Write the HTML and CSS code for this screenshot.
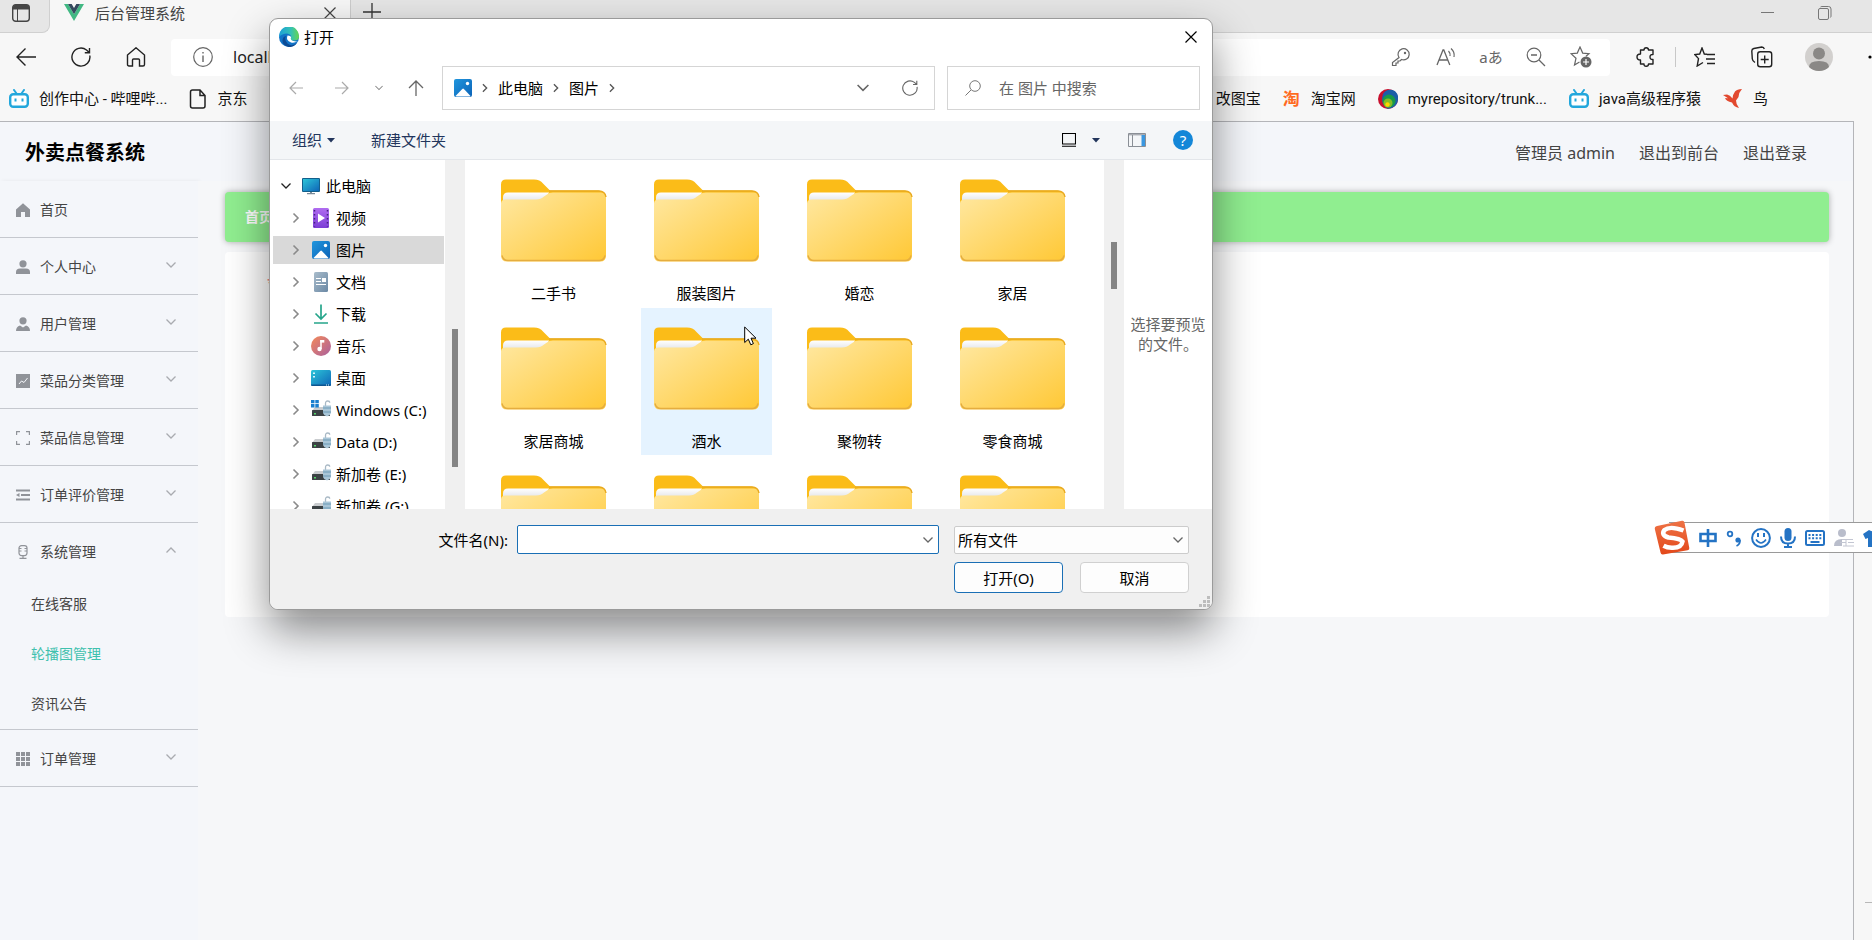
FILE: index.html
```html
<!DOCTYPE html>
<html lang="zh-CN">
<head>
    <meta charset="UTF-8">
    <meta name="viewport" content="width=device-width, initial-scale=1.0">
    <title>后台管理系统</title>
    <link rel="stylesheet" href="styles.css">
</head>
<body>

    <svg class="defs" aria-hidden="true">
        <defs>
            <linearGradient id="gFolder" x1="0" y1="0" x2="1" y2="1">
                <stop offset="0" stop-color="#ffe8a2"/>
                <stop offset="1" stop-color="#ffc835"/>
            </linearGradient>
            <linearGradient id="gPaper" x1="0" y1="0" x2="0" y2="1">
                <stop offset="0" stop-color="#fff"/>
                <stop offset="1" stop-color="#d9dbdf"/>
            </linearGradient>
            <linearGradient id="gBlue" x1="0" y1="0" x2="1" y2="1">
                <stop offset="0" stop-color="#2cc5d8"/>
                <stop offset="1" stop-color="#0f66b8"/>
            </linearGradient>
            <linearGradient id="gPic" x1="0" y1="0" x2="1" y2="1">
                <stop offset="0" stop-color="#2196dd"/>
                <stop offset="1" stop-color="#0b63b8"/>
            </linearGradient>
            <linearGradient id="gVideo" x1="0" y1="0" x2="0" y2="1">
                <stop offset="0" stop-color="#b06cf0"/>
                <stop offset="1" stop-color="#7c3ed6"/>
            </linearGradient>
            <linearGradient id="gMusic" x1="0" y1="0" x2="1" y2="1">
                <stop offset="0" stop-color="#f58a58"/>
                <stop offset="1" stop-color="#a9609f"/>
            </linearGradient>
            <linearGradient id="gDoc" x1="0" y1="0" x2="1" y2="1">
                <stop offset="0" stop-color="#a9bccb"/>
                <stop offset="1" stop-color="#6b89a5"/>
            </linearGradient>
            <linearGradient id="gEdgeTop" x1="0" y1="0" x2="1" y2="0">
                <stop offset="0" stop-color="#1a9fd8"/>
                <stop offset=".6" stop-color="#35c1b4"/>
                <stop offset="1" stop-color="#66d64f"/>
            </linearGradient>
            <linearGradient id="gSogou" x1="0" y1="0" x2="0" y2="1">
                <stop offset="0" stop-color="#ee7346"/>
                <stop offset="1" stop-color="#e3481a"/>
            </linearGradient>
        </defs>

        <symbol id="folder" viewBox="0 0 106 83">
            <path d="M0 21V6q0-5 5-5h28q6 0 9 4l7 7h48q7 0 7 6v16H0z" fill="#fbbc18"/>
            <path d="M2 26v-7q0-5 5-5h41l-4 8z" fill="url(#gPaper)"/>
            <path d="M0 25q0-4 5-4h30q5 0 8-3l3-2q2-2 6-2h47q6 0 6 5v58q0 6-6 6H6q-6 0-6-6z" fill="url(#gFolder)"/>
            <path d="M1 77q1 5 6 5h91q5 0 6-5" fill="none" stroke="#e5ad3f" stroke-width="1.4"/>
            <path d="M48 12.500h50q6 0 7 6" fill="none" stroke="#e8a91f" stroke-width="1.4"/>
        </symbol>
        <symbol id="chev-right" viewBox="0 0 10 12"><path d="M2.500 1.500L7 6l-4.500 4.500" fill="none" stroke="currentColor" stroke-width="1.600"/></symbol>
        <symbol id="chev-down" viewBox="0 0 14 10"><path d="M2.500 2.500L7 7l4.500-4.500" fill="none" stroke="currentColor" stroke-width="1.300"/></symbol>
        <symbol id="caret" viewBox="0 0 8 5"><path d="M0 0h8L4 4.500z" fill="currentColor"/></symbol>
        <symbol id="pictures" viewBox="0 0 18 18">
            <rect width="18" height="18" rx="2" fill="url(#gPic)"/>
            <path d="M1.500 17l6.800-7q.8-.8 1.600 0l6.600 7q-.4.500-1 .500h-13z" fill="#fff"/>
            <circle cx="13.500" cy="4.500" r="1.700" fill="#fff"/>
        </symbol>
        <symbol id="pc" viewBox="0 0 18 17">
            <path d="M8 13h2v2h-2z" fill="#7b8b99"/><path d="M5 15h8v1.300H5z" fill="#7b8b99"/>
            <rect y="0" width="18" height="14" rx="1" fill="#135f8b"/>
            <rect x="1" y="1" width="16" height="12" fill="url(#gBlue)"/>
        </symbol>
        <symbol id="video" viewBox="0 0 20 20">
            <rect x="2" width="16" height="20" rx="1.500" fill="url(#gVideo)"/>
            <path d="M7 5.500l7 4.500-7 4.500z" fill="#fff"/>
            <path d="M3.500 2v16.500M16.500 2v16.500" stroke="#44217f" stroke-width="1.500" stroke-dasharray="1.600 2.400"/>
        </symbol>
        <symbol id="doc" viewBox="0 0 20 20">
            <rect x="3" width="14" height="20" rx="1.500" fill="url(#gDoc)"/>
            <path d="M5 6.500h5M5 9.500h5M5 12.500h10" stroke="#fff" stroke-width="1.200"/>
            <rect x="11" y="6" width="4" height="4" fill="#fff"/>
        </symbol>
        <symbol id="download" viewBox="0 0 20 20">
            <path d="M10 .5v14M4.500 9.500L10 15l5.500-5.500M3 19h14" fill="none" stroke="#26a58b" stroke-width="1.700"/>
        </symbol>
        <symbol id="music" viewBox="0 0 20 20">
            <circle cx="10" cy="10" r="10" fill="url(#gMusic)"/>
            <path d="M10 4v9" stroke="#fff" stroke-width="1.500"/><path d="M9.300 4h4v2.600h-4z" fill="#fff"/>
            <circle cx="8.500" cy="13" r="2.200" fill="#fff"/>
        </symbol>
        <symbol id="desktop" viewBox="0 0 20 20">
            <rect y="2" width="20" height="16" rx="1.500" fill="url(#gBlue)"/>
            <path d="M0 16.500h20q0 1.500-1.500 1.500h-17Q0 18 0 16.500z" fill="#0d5590"/>
            <path d="M2 4.500h2v1.500H2zM2 8h2v1.500H2zM15 16.500h1v1h-1zM17 16.500h1v1h-1z" fill="#d8f4fa"/>
        </symbol>
        <symbol id="drive" viewBox="0 0 20 20">
            <path d="M4 7h13l3 4H1z" fill="#c9cccf"/>
            <rect x="1" y="10" width="18" height="6" rx=".5" fill="#3c4245"/>
            <rect x="3" y="13" width="2" height="1.500" fill="#55d36a"/>
            <path d="M14.500 6V3.500q0-2.500 2.200-2.500 2 0 2 1.800" fill="none" stroke="#a9b9c5" stroke-width="1.300"/>
            <path d="M12 5.500h8V13q-1 3-4 3.500-3-.5-4-3.500z" fill="#a9c6d8"/>
            <path d="M12 8h8M12 12h8" stroke="#6d9ab5" stroke-width="1"/>
        </symbol>
        <symbol id="winflag" viewBox="0 0 20 20">
            <path d="M0 0h3.500v3.300H0zM4.300 0h3.500v3.300H4.300zM0 4.100h3.500v3.300H0zM4.300 4.100h3.500v3.300H4.300z" fill="#1a7fcf"/>
        </symbol>
        <symbol id="bili" viewBox="0 0 20 20">
            <path d="M5 1l2.500 3.500M15 1l-2.500 3.500" stroke="#23a7dc" stroke-width="2" stroke-linecap="round"/>
            <rect x="1.200" y="5.200" width="17.600" height="12.600" rx="3" fill="#fff" stroke="#23a7dc" stroke-width="2.400"/>
            <path d="M6.500 9.500v3M13.500 9.500v3" stroke="#23a7dc" stroke-width="2"/>
        </symbol>
        <symbol id="refresh" viewBox="0 0 20 20">
            <path d="M18.800 8.500A9 9 0 1 1 15.500 3L18 5.200M18.500 1v4.700h-4.700" fill="none" stroke="currentColor" stroke-width="1.400"/>
        </symbol>
        <symbol id="cross" viewBox="0 0 12 12"><path d="M.5.5l11 11M11.500.5l-11 11" stroke="currentColor" stroke-width="1.200"/></symbol>
    </svg>

    <!-- browser chrome -->
    <div class="tabs">
        <button class="tab-menu" aria-label="标签操作">
            <svg width="18" height="18" viewBox="0 0 18 18"><rect x=".7" y=".7" width="16.600" height="16.600" rx="3" fill="none" stroke="#444" stroke-width="1.400"/><path d="M1 5.500V3q0-2 2-2h12q2 0 2 2v2.500z" fill="#444"/><path d="M5.500 5v12" stroke="#444"/></svg>
        </button>
        <div class="tab">
            <svg width="20" height="17" viewBox="0 0 20 17"><path d="M0 0h4l6 10.300L16 0h4L10 17z" fill="#41b883"/><path d="M4 0h3.700L10 4l2.300-4H16l-6 10.300z" fill="#34495e"/></svg>
            <span class="tab-title">后台管理系统</span>
            <button aria-label="关闭标签页"><svg width="12" height="12"><use href="#cross"/></svg></button>
        </div>
        <button class="tab-new" aria-label="新建标签页"><svg width="18" height="18" viewBox="0 0 18 18"><path d="M9 0v18M0 9h18" stroke="#333" stroke-width="1.300"/></svg></button>
        <div class="win-buttons">
            <button aria-label="最小化"><svg width="14" height="14" viewBox="0 0 14 14"><path d="M0 6.500h13" stroke="#777"/></svg></button>
            <button aria-label="还原"><svg width="14" height="14" viewBox="0 0 14 14"><rect x=".5" y="2.500" width="10" height="11" rx="1.500" fill="none" stroke="#777"/><path d="M2.500 1q.5-.5 1.500-.5h6.500q2.500 0 2.500 2.500v7q0 1-.6 1.500" fill="none" stroke="#777"/></svg></button>
        </div>
    </div>

    <div class="toolbar">
        <div class="nav-buttons">
            <button aria-label="后退"><svg width="20" height="20" viewBox="0 0 20 20"><path d="M20 10H1M9.500 1.500L1 10l8.500 8.500" fill="none" stroke="#222" stroke-width="1.400"/></svg></button>
            <button aria-label="刷新"><svg width="20" height="20"><use href="#refresh"/></svg></button>
            <button aria-label="主页"><svg width="20" height="20" viewBox="0 0 20 20"><path d="M1.500 8L10 .8 18.500 8v9.500q0 1.500-1.500 1.500h-3.500v-6q0-1-1-1h-5q-1 0-1 1v6H3q-1.500 0-1.500-1.500z" fill="none" stroke="#222" stroke-width="1.400"/></svg></button>
        </div>
        <div class="url">
            <svg width="20" height="20" viewBox="0 0 20 20"><circle cx="10" cy="10" r="9.300" fill="none" stroke="#666" stroke-width="1.200"/><path d="M10 8.500V15M10 5v1.500" stroke="#666" stroke-width="1.400"/></svg>
            <input type="text" aria-label="地址" value="localhost:8080">
            <button aria-label="密码"><svg width="20" height="20" viewBox="0 0 20 20"><path d="M8 10.500A5.600 5.600 0 1 1 10.500 12.500L9 14H7v2H5v2.500H1.500v-3z" fill="none" stroke="#666" stroke-width="1.200"/><circle cx="14" cy="6" r="1.200" fill="#666"/></svg></button>
            <button aria-label="朗读"><svg width="20" height="20" viewBox="0 0 20 20"><path d="M1 18L7 3h.8l6 15M3 13h9" fill="none" stroke="#666" stroke-width="1.300"/><path d="M12.500 4q2 2 1.500 5M15 1.500q4 3.500 3 8.500" fill="none" stroke="#666" stroke-width="1.200"/></svg></button>
            <button class="translate" aria-label="翻译">aあ</button>
            <button aria-label="缩小"><svg width="20" height="20" viewBox="0 0 20 20"><circle cx="8" cy="8" r="6.800" fill="none" stroke="#666" stroke-width="1.200"/><path d="M5 8h6M13 13l6 6" stroke="#666" stroke-width="1.300"/></svg></button>
            <button aria-label="收藏"><svg width="22" height="22" viewBox="0 0 22 22"><path d="M9.500 16L4.500 19 6 12.200 1 7.700l6.300-.6L10 1l2.700 6.100 6.300.6-3 2.600" fill="none" stroke="#666" stroke-width="1.200"/><circle cx="16" cy="16" r="5.500" fill="#666"/><path d="M16 13v6M13 16h6" stroke="#fff" stroke-width="1.200"/></svg></button>
        </div>
        <div class="tools">
            <button aria-label="扩展"><svg width="20" height="20" viewBox="0 0 20 20"><path d="M4.500 3H8q0-2.200 2.200-2.200T12.500 3H17v4.500q-3-.3-3 2.500t3 2.500V17h-4.500q0 2.200-2.300 2.200T8 17H4.500v-4Q1 13 1 10t3.500-3z" fill="none" stroke="#222" stroke-width="1.400" stroke-linejoin="round"/></svg></button>
            <span class="divider"></span>
            <button aria-label="收藏夹"><svg width="22" height="20" viewBox="0 0 22 20"><path d="M13 7.200l-2.700-.2L8 1 5.700 7 .8 7.600l3.700 4L3.200 19 9 15.500M13 7.500h8M12 12h9M13 16.500h8" fill="none" stroke="#222" stroke-width="1.400"/></svg></button>
            <button class="spaced" aria-label="集锦"><svg width="22" height="22" viewBox="0 0 22 22"><path d="M4 16.500Q1.500 15 1.300 13L.8 5q0-2 2-2.500l8-1.500q2 0 2.500 2" fill="none" stroke="#222" stroke-width="1.400"/><rect x="6.700" y="5.700" width="14" height="15" rx="2.500" fill="none" stroke="#222" stroke-width="1.400"/><path d="M13.700 9.500v8M9.700 13.500h8" stroke="#222" stroke-width="1.400"/></svg></button>
            <button class="spaced" aria-label="用户"><svg width="28" height="28" viewBox="0 0 28 28"><circle cx="14" cy="14" r="14" fill="#d2d0ce"/><circle cx="14" cy="10.500" r="6" fill="#8a8886"/><path d="M4 24q0-6 10-6t10 6q-4 4-10 4T4 24z" fill="#8a8886"/></svg></button>
            <button class="more" aria-label="更多"><svg width="20" height="4" viewBox="0 0 20 4"><circle cx="5" cy="2" r="1.600"/><circle cx="11" cy="2" r="1.600"/><circle cx="17" cy="2" r="1.600"/></svg></button>
        </div>
    </div>

    <div class="bookmarks">
        <a href="#"><svg width="20" height="20"><use href="#bili"/></svg>创作中心 - 哔哩哔...</a>
        <a href="#"><svg width="18" height="20" viewBox="0 0 18 20"><path d="M3.500 1H11l5 5.500V17q0 2-2 2H3.500q-2 0-2-2V3q0-2 2-2zM11 1v5.500h5" fill="none" stroke="#222" stroke-width="1.500"/></svg>京东</a>
        <a href="#" class="first-right">改图宝</a>
        <a href="#"><span class="taobao">淘</span>淘宝网</a>
        <a href="#"><svg width="20" height="20" viewBox="0 0 20 20"><circle cx="10" cy="10" r="10" fill="#c8102e"/><path d="M5 5a8 8 0 0 1 15 5A9.500 9.500 0 0 1 9 19.500Q2 14 5 5z" fill="#1b5fa8"/><circle cx="11" cy="12" r="6.500" fill="#189a48"/><circle cx="10" cy="14" r="4.500" fill="#86bc25"/><circle cx="9.500" cy="15.500" r="2.200" fill="#ffd500"/></svg>myrepository/trunk...</a>
        <a href="#"><svg width="20" height="20"><use href="#bili"/></svg>java高级程序猿</a>
        <a href="#"><svg width="20" height="20" viewBox="0 0 20 20"><path d="M0 6l4-.5Q7 6 9.500 9.500 10 5 12 2.500 14 0 19 0q-3 3-3.500 8l-2.500 3.500q0 4 3 7.500-5-1-7-5.500Q3 12 2 9l3 .3z" fill="#e2492f"/></svg>鸟</a>
    </div>

    <!-- admin page -->
    <div class="viewport">
        <div class="page">
            <header>
                <h1>外卖点餐系统</h1>
                <nav>
                    <span>管理员 admin</span>
                    <a href="#">退出到前台</a>
                    <a href="#">退出登录</a>
                </nav>
            </header>
            <div class="content">
                <aside>
                    <ul class="menu">
                        <li><a href="#"><svg class="mi" viewBox="0 0 14 14"><path d="M7 .3L0 6.500V14h5V9h4v5h5V6.500z"/></svg>首页</a></li>
                        <li><a href="#"><svg class="mi" viewBox="0 0 14 14"><circle cx="7" cy="3.800" r="3.600"/><path d="M0 14v-2q0-3.500 4-3.500h6q4 0 4 3.500v2z"/></svg>个人中心<svg class="arrow"><use href="#chev-down"/></svg></a></li>
                        <li><a href="#"><svg class="mi" viewBox="0 0 14 14"><circle cx="7" cy="3.800" r="3.600"/><path d="M0 14q0-4.500 4-5.500l3 2 3-2q4 1 4 5.500z"/></svg>用户管理<svg class="arrow"><use href="#chev-down"/></svg></a></li>
                        <li><a href="#"><svg class="mi" viewBox="0 0 14 14"><path d="M0 0h14v14H0z"/><path d="M3 10l2.500-3 2.500 1.500L11.500 4" fill="none" stroke="#f4f6fa"/></svg>菜品分类管理<svg class="arrow"><use href="#chev-down"/></svg></a></li>
                        <li><a href="#"><svg class="mi line" viewBox="0 0 14 14"><path d="M.6 4V.6H4M10 .6h3.400V4M13.400 10v3.400H10M4 13.400H.6V10"/></svg>菜品信息管理<svg class="arrow"><use href="#chev-down"/></svg></a></li>
                        <li><a href="#"><svg class="mi" viewBox="0 0 14 14"><path d="M0 1.500h14v2H0zM5 6h9v2H5zM0 10.500h14v2H0zM0 7l3.500-2v4z"/></svg>订单评价管理<svg class="arrow"><use href="#chev-down"/></svg></a></li>
                        <li>
                            <a href="#"><svg class="mi line" viewBox="0 0 14 14"><rect x="3" y=".6" width="8" height="10" rx="2.500"/><path d="M3 3.500h2.500M8.500 3.500H11M3 6h2.500M8.500 6H11M7 11v2.500M3.500 13.400h7"/></svg>系统管理<svg class="arrow up"><use href="#chev-down"/></svg></a>
                            <ul class="submenu">
                                <li><a href="#">在线客服</a></li>
                                <li><a href="#" class="active">轮播图管理</a></li>
                                <li><a href="#">资讯公告</a></li>
                            </ul>
                        </li>
                        <li><a href="#"><svg class="mi" viewBox="0 0 14 14"><path d="M0 0h4v4H0zM5 0h4v4H5zM10 0h4v4h-4zM0 5h4v4H0zM5 5h4v4H5zM10 5h4v4h-4zM0 10h4v4H0zM5 10h4v4H5zM10 10h4v4h-4z"/></svg>订单管理<svg class="arrow"><use href="#chev-down"/></svg></a></li>
                    </ul>
                </aside>
                <main>
                    <div class="crumbs">首页</div>
                    <div class="card"><span class="required">*</span></div>
                </main>
            </div>
        </div>
        <div class="rail"><span></span></div>
    </div>

    <!-- file picker -->
    <div class="dialog" role="dialog" aria-label="打开">
        <div class="dialog-title">
            <svg width="20" height="20" viewBox="0 0 20 20"><circle cx="10" cy="10" r="10" fill="#1173c7"/><path d="M0 9.500A10 10 0 0 1 20 9q.3 4.500-5 4.500-4 0-3-2.500.6-4-4-4.500Q3 6.500 0 10z" fill="url(#gEdgeTop)"/><path d="M7 9q-2 4 1.500 7.500 4 3.500 9.500-.5-3 4.500-8.500 4Q3 18 3.500 13 4 9.500 7 9z" fill="#0c4a94"/><path d="M8.500 8.500q-2 5 3.500 7 3 1 7-1.500-2 .8-4.500 0-3.500-1-2.500-3.200.5-2-3.500-2.300z" fill="#fff"/></svg>
            <h2>打开</h2>
            <button aria-label="关闭"><svg width="12" height="12"><use href="#cross"/></svg></button>
        </div>

        <div class="dialog-nav">
            <div class="history">
                <button aria-label="返回"><svg width="14" height="14" viewBox="0 0 14 14"><path d="M14 7H1M7 1L1 7l6 6" fill="none" stroke="#aaa" stroke-width="1.200"/></svg></button>
                <button aria-label="前进"><svg width="14" height="14" viewBox="0 0 14 14"><path d="M0 7h13M7 1l6 6-6 6" fill="none" stroke="#aaa" stroke-width="1.200"/></svg></button>
                <button class="recent" aria-label="最近浏览"><svg width="12" height="8"><use href="#chev-down"/></svg></button>
                <button aria-label="上移"><svg width="16" height="16" viewBox="0 0 16 16"><path d="M8 16V1M1 8l7-7 7 7" fill="none" stroke="#666" stroke-width="1.300"/></svg></button>
            </div>
            <div class="address">
                <svg width="18" height="18"><use href="#pictures"/></svg>
                <svg class="sep"><use href="#chev-right"/></svg>
                <a href="#">此电脑</a>
                <svg class="sep"><use href="#chev-right"/></svg>
                <a href="#">图片</a>
                <svg class="sep"><use href="#chev-right"/></svg>
                <button class="history-drop" aria-label="以前的位置"><svg width="18" height="12"><use href="#chev-down"/></svg></button>
                <button aria-label="刷新图片"><svg width="16" height="16"><use href="#refresh"/></svg></button>
            </div>
            <div class="search">
                <svg width="16" height="16" viewBox="0 0 16 16"><circle cx="10" cy="6" r="5.300" fill="none" stroke="#777"/><path d="M6 10l-5.500 5.500" stroke="#777"/></svg>
                <input type="text" aria-label="搜索" placeholder="在 图片 中搜索">
            </div>
        </div>

        <div class="dialog-tools">
            <button>组织<svg width="8" height="5"><use href="#caret"/></svg></button>
            <button>新建文件夹</button>
            <div class="view-tools">
                <button aria-label="视图"><svg width="14" height="14" viewBox="0 0 14 14"><path d="M.5.5h13v10.500H.5zM0 13.300h14" fill="none" stroke="#000" stroke-width="1.100"/></svg></button>
                <button class="view-more" aria-label="更多选项"><svg width="8" height="5"><use href="#caret"/></svg></button>
                <button class="pane" aria-label="预览窗格"><svg width="18" height="14" viewBox="0 0 18 14"><path d="M.5.5h17v13H.5zM.5 1.800h17M4.500 2v11" fill="none" stroke="#8a8f96"/><path d="M13.500 2H17v11h-3.500z" fill="#3b97e0"/></svg></button>
                <button class="help" aria-label="帮助">?</button>
            </div>
        </div>

        <div class="dialog-body">
            <ul class="tree">
                <li class="root"><svg class="fold open"><use href="#chev-down"/></svg><svg width="18" height="17"><use href="#pc"/></svg>此电脑</li>
                <li><svg class="fold"><use href="#chev-right"/></svg><svg class="ti"><use href="#video"/></svg>视频</li>
                <li class="selected"><svg class="fold"><use href="#chev-right"/></svg><svg class="ti" viewBox="0 0 20 20"><use href="#pictures" x="1" y="1" width="18" height="18"/></svg>图片</li>
                <li><svg class="fold"><use href="#chev-right"/></svg><svg class="ti"><use href="#doc"/></svg>文档</li>
                <li><svg class="fold"><use href="#chev-right"/></svg><svg class="ti"><use href="#download"/></svg>下载</li>
                <li><svg class="fold"><use href="#chev-right"/></svg><svg class="ti"><use href="#music"/></svg>音乐</li>
                <li><svg class="fold"><use href="#chev-right"/></svg><svg class="ti"><use href="#desktop"/></svg>桌面</li>
                <li><svg class="fold"><use href="#chev-right"/></svg><svg class="ti"><use href="#drive"/><use href="#winflag"/></svg>Windows (C:)</li>
                <li><svg class="fold"><use href="#chev-right"/></svg><svg class="ti"><use href="#drive"/></svg>Data (D:)</li>
                <li><svg class="fold"><use href="#chev-right"/></svg><svg class="ti"><use href="#drive"/></svg>新加卷 (E:)</li>
                <li><svg class="fold"><use href="#chev-right"/></svg><svg class="ti"><use href="#drive"/></svg>新加卷 (G:)</li>
            </ul>
            <div class="track tree-track"><div class="thumb"></div></div>
            <div class="files">
                <div class="file"><svg><use href="#folder"/></svg>二手书</div>
                <div class="file"><svg><use href="#folder"/></svg>服装图片</div>
                <div class="file"><svg><use href="#folder"/></svg>婚恋</div>
                <div class="file"><svg><use href="#folder"/></svg>家居</div>
                <div class="file"><svg><use href="#folder"/></svg>家居商城</div>
                <div class="file hover"><svg><use href="#folder"/></svg>酒水</div>
                <div class="file"><svg><use href="#folder"/></svg>聚物转</div>
                <div class="file"><svg><use href="#folder"/></svg>零食商城</div>
                <div class="file"><svg><use href="#folder"/></svg></div>
                <div class="file"><svg><use href="#folder"/></svg></div>
                <div class="file"><svg><use href="#folder"/></svg></div>
                <div class="file"><svg><use href="#folder"/></svg></div>
            </div>
            <div class="track files-track"><div class="thumb"></div></div>
            <div class="preview">选择要预览的文件。</div>
        </div>

        <form class="dialog-footer">
            <label for="filename">文件名(N):</label>
            <div class="combo filename">
                <input type="text" id="filename">
                <svg width="14" height="10"><use href="#chev-down"/></svg>
            </div>
            <div class="combo filetype">
                <select aria-label="文件类型"><option>所有文件</option></select>
                <svg width="14" height="10"><use href="#chev-down"/></svg>
            </div>
            <div class="actions">
                <button type="button" class="primary">打开(O)</button>
                <button type="button">取消</button>
            </div>
        </form>
        <svg class="grip" width="12" height="12" viewBox="0 0 12 12"><path d="M9 0h3v3H9zM5 4h3v3H5zM9 4h3v3H9zM1 8h3v3H1zM5 8h3v3H5zM9 8h3v3H9z" fill="#bdbdbd"/></svg>
    </div>

    <svg class="cursor" width="13" height="20" viewBox="0 0 13 20"><path d="M.7 1v15.500l3.600-3.300 2.500 5.600 2.600-1.200L7 12.200h5z" fill="#fff" stroke="#000"/></svg>

    <!-- input method bar -->
    <div class="ime">
        <svg class="ime-logo" width="36" height="36" viewBox="0 0 36 36"><path d="M3 6L28 .7q2-.4 2.400 1.600L35.300 28q.3 2-1.700 2.300L9 34.500q-2 .3-2.400-1.700L.8 9Q.5 6.500 3 6z" fill="url(#gSogou)"/><path d="M29.500 10.500Q16 5.500 10.500 10q-4 5 4 7.500 12 1 14 4-1 6.500-10 6.300-5 .2-9-2" fill="none" stroke="#fff" stroke-width="4.500"/></svg>
        <svg width="18" height="18" viewBox="0 0 18 18"><path d="M1.500 5h15v7h-15zM9 0v18" fill="none" stroke="#2473c4" stroke-width="2.600"/></svg>
        <svg width="16" height="18" viewBox="0 0 16 18"><circle cx="4" cy="5" r="2.300" fill="none" stroke="#2473c4" stroke-width="1.800"/><circle cx="12" cy="11" r="2.600" fill="#2473c4"/><path d="M14 11q.5 4-3.500 6" fill="none" stroke="#2473c4" stroke-width="1.600"/></svg>
        <svg width="20" height="20" viewBox="0 0 20 20"><circle cx="10" cy="10" r="8.900" fill="none" stroke="#2473c4" stroke-width="2"/><path d="M7 5v4M13 5v4" stroke="#2473c4" stroke-width="2"/><path d="M5 11.500q5 7 10 0" fill="none" stroke="#2473c4" stroke-width="1.600"/></svg>
        <svg width="16" height="20" viewBox="0 0 16 20"><rect x="4.500" width="7" height="13" rx="3.500" fill="#2473c4"/><path d="M1 8.500q0 7 7 7t7-7M8 15v4M4 19h8" fill="none" stroke="#2473c4" stroke-width="2"/></svg>
        <svg width="20" height="16" viewBox="0 0 20 16"><rect x="1" y="1" width="18" height="14" rx="1.500" fill="none" stroke="#2473c4" stroke-width="2"/><path d="M3.500 5h13M3.500 8.300h13" stroke="#2473c4" stroke-width="2" stroke-dasharray="2 1.600"/><path d="M5.500 12h9" stroke="#2473c4" stroke-width="2"/></svg>
        <svg width="20" height="18" viewBox="0 0 20 18"><circle cx="8" cy="4" r="4" fill="#b9bdcb"/><path d="M0 17q0-7 8-7v7z" fill="#b9bdcb"/><path d="M8 10.500h11M6 13.500h6M14 13.500h6M9 17h11M12 10v7" fill="none" stroke="#c3c6d2"/></svg>
        <svg width="22" height="18" viewBox="0 0 22 18"><path d="M6 1q5 3 10 0l6 4-2.500 5-2.500-1v9H5V9l-2.500 1L0 5z" fill="#2473c4"/></svg>
    </div>

</body>
</html>
```

FILE: styles.css
```css
* {
    box-sizing: border-box;
}

body {
    margin: 0;
    height: 100vh;
    display: flex;
    flex-direction: column;
    overflow: hidden;
    position: relative;
    background: #f7f7f7;
    color: #111;
    font-family: "Noto Sans", "Noto Sans CJK SC", sans-serif;
    font-size: 15px;
    line-height: 20px;
}

button {
    display: flex;
    align-items: center;
    justify-content: center;
    flex-shrink: 0;
    padding: 0;
    border: none;
    background: none;
    color: inherit;
    font: inherit;
}

input,
select {
    min-width: 0;
    padding: 0;
    border: none;
    outline: none;
    background: none;
    color: inherit;
    font: inherit;
}

a {
    color: inherit;
    text-decoration: none;
}

ul {
    margin: 0;
    padding: 0;
    list-style: none;
}

svg {
    flex-shrink: 0;
}

.defs {
    position: absolute;
    width: 0;
    height: 0;
}

/* browser chrome */
.tabs {
    display: flex;
    height: 33px;
    flex-shrink: 0;
    background: #f7f7f7;
}

.tab-menu {
    width: 50px;
    padding: 0 8px 7px 0;
    background: #e6e6e6;
    border-right: 1px solid #d0d0d0;
    border-bottom: 1px solid #d0d0d0;
    border-bottom-right-radius: 8px;
}

.tab {
    display: flex;
    align-items: center;
    width: 300px;
    padding: 0 14px 8px;
    gap: 11px;
    color: #444;
}

.tab-title {
    flex: 1;
}

.tab-new {
    width: 50px;
    padding: 0 8px 8px 0;
    background: #e6e6e6;
    border-left: 1px solid #ccc;
    border-bottom: 1px solid #d0d0d0;
}

.win-buttons {
    display: flex;
    flex: 1;
    justify-content: flex-end;
    gap: 43px;
    padding: 0 40px 7px 0;
    background: #e6e6e6;
    border-bottom: 1px solid #d0d0d0;
}

.toolbar {
    display: flex;
    align-items: center;
    height: 48px;
    flex-shrink: 0;
    color: #222;
}

.toolbar button {
    width: 28px;
    height: 28px;
}

.nav-buttons {
    display: flex;
    gap: 27px;
    padding: 0 21px 0 12px;
}

.url {
    display: flex;
    flex: 1;
    align-items: center;
    gap: 17px;
    height: 37px;
    padding: 0 15px 0 22px;
    border-radius: 4px;
    background: #fff;
}

.url input {
    flex: 1;
    padding-left: 3px;
    font-size: 16px;
}

.url .translate {
    color: #666;
    font-size: 15px;
}

.tools {
    display: flex;
    align-items: center;
    gap: 15px;
    margin: 0 -13px 0 22px;
}

.divider {
    width: 1px;
    height: 20px;
    background: #c8c8c8;
}

.tools .spaced {
    margin-left: 14px;
}

.tools .more {
    width: 20px;
    margin-left: 17px;
}

.bookmarks {
    display: flex;
    align-items: center;
    gap: 22px;
    height: 40px;
    flex-shrink: 0;
    padding: 0 104px 4px 9px;
    font-family: Roboto, "Noto Sans CJK SC", sans-serif;
}

.bookmarks a {
    display: flex;
    align-items: center;
    gap: 10px;
    white-space: nowrap;
}

.first-right {
    margin-left: auto;
}

.taobao {
    width: 18px;
    color: #ff6a1f;
    font-size: 17px;
    font-weight: bold;
}

/* admin page */
.viewport {
    display: flex;
    flex: 1;
    min-height: 0;
}

.page {
    display: flex;
    flex: 1;
    flex-direction: column;
    border-top: 1px solid #b4b5b9;
    border-right: 1px solid #b4b5b9;
    background: #f4f6fa;
    color: #444;
}

.rail {
    display: flex;
    align-items: flex-end;
    justify-content: flex-end;
    width: 18px;
    padding-bottom: 37px;
}

.rail span {
    width: 7px;
    height: 1px;
    background: #b8b8b8;
}

header {
    display: flex;
    align-items: center;
    justify-content: space-between;
    height: 59px;
    padding: 2px 46px 0 25px;
}

h1 {
    margin: 0;
    color: #000;
    font-size: 20px;
    line-height: 28px;
}

header nav {
    display: flex;
    gap: 24px;
    font-size: 16px;
}

.content {
    display: flex;
    flex: 1;
}

aside {
    width: 198px;
    box-shadow: 2px 0 4px rgba(0, 0, 0, 0.06);
    font-size: 14px;
}

.menu > li {
    border-bottom: 1px solid #c5c8ce;
}

.menu > li > a {
    display: flex;
    align-items: center;
    gap: 10px;
    height: 56px;
    padding: 2px 20px 0 16px;
}

.mi {
    width: 14px;
    height: 14px;
    fill: #909399;
}

.mi.line {
    fill: none;
    stroke: #909399;
    stroke-width: 1.2;
}

.arrow {
    width: 14px;
    height: 10px;
    margin: 0 0 4px auto;
    color: #a9abb0;
}

.arrow.up {
    transform: rotate(180deg);
}

.submenu a {
    display: block;
    padding-left: 31px;
    line-height: 50px;
}

.submenu .active {
    color: #3fc1ae;
}

main {
    flex: 1;
    padding: 11px 24px 0 27px;
    background: #f6f7f9;
}

.crumbs {
    height: 50px;
    padding-left: 20px;
    border-radius: 4px;
    background: #90ee90;
    box-shadow: 0 0 6px rgba(0, 0, 0, 0.3);
    color: #fff;
    font-size: 14px;
    font-weight: bold;
    line-height: 50px;
}

.card {
    height: 365px;
    margin-top: 10px;
    padding: 20px 42px;
    border-radius: 4px;
    background: #fff;
}

.required {
    color: #f56c6c;
    font-size: 14px;
}

/* file picker */
.dialog {
    position: absolute;
    top: 18px;
    left: 269px;
    width: 944px;
    overflow: hidden;
    border: 1px solid #9a9a9a;
    border-radius: 9px;
    background: #fff;
    box-shadow: 0 20px 44px rgba(0, 0, 0, 0.46);
    color: #000;
}

.dialog-title {
    display: flex;
    align-items: center;
    gap: 5px;
    height: 36px;
    padding: 0 15px 0 9px;
}

.dialog-title h2 {
    flex: 1;
    margin: 0;
    font-size: 15px;
    font-weight: normal;
}

.dialog-nav {
    display: flex;
    align-items: center;
    padding: 11px 12px 11px 16px;
}

.history {
    display: flex;
    width: 156px;
    gap: 26px;
}

.history button {
    width: 20px;
}

.history .recent {
    width: 14px;
    margin: 0 -6px;
    color: #888;
}

.address,
.search {
    display: flex;
    align-items: center;
    height: 44px;
    border: 1px solid #d5d5d5;
}

.address {
    flex: 1;
    gap: 8px;
    padding: 0 16px 0 11px;
}

.sep {
    width: 10px;
    height: 10px;
    color: #555;
}

.address button {
    color: #666;
}

.address .history-drop {
    margin: 0 22px 0 auto;
}

.search {
    width: 253px;
    gap: 18px;
    margin-left: 12px;
    padding-left: 17px;
}

.search input {
    flex: 1;
}

.search input::placeholder {
    color: #666;
    opacity: 1;
}

.dialog-tools {
    display: flex;
    align-items: center;
    height: 39px;
    gap: 36px;
    padding: 0 19px 0 22px;
    border-bottom: 1px solid #e3e6ea;
    background: #f4f6f8;
    color: #22355c;
}

.dialog-tools button {
    gap: 5px;
}

.view-tools {
    display: flex;
    flex: 1;
    align-items: center;
    justify-content: flex-end;
}

.view-more {
    margin: 0 28px 0 16px;
}

.dialog-tools .help {
    width: 20px;
    height: 20px;
    margin-left: 27px;
    border-radius: 50%;
    background: #1487d8;
    color: #fff;
}

.dialog-body {
    display: flex;
    height: 349px;
    overflow: hidden;
}

.tree {
    width: 175px;
    padding-top: 12px;
}

.tree li {
    display: flex;
    align-items: center;
    gap: 5px;
    height: 28px;
    margin: 0 1px 4px 3px;
    padding-left: 18px;
    white-space: nowrap;
}

.tree .root {
    gap: 6px;
    padding-left: 6px;
}

.tree .selected {
    background: #d9d9d9;
}

.fold {
    width: 10px;
    height: 12px;
    margin-right: 5px;
    color: #8a8a8a;
}

.fold.open {
    width: 14px;
    height: 10px;
    margin-right: 3px;
    color: #222;
}

.ti {
    width: 20px;
    height: 20px;
}

.track {
    width: 20px;
    background: #f0f0f0;
}

.thumb {
    width: 6px;
    margin: 0 auto;
    background: #858585;
}

.tree-track .thumb {
    height: 138px;
    margin-top: 169px;
}

.files-track .thumb {
    height: 47px;
    margin-top: 82px;
}

.files {
    display: grid;
    flex: 1;
    grid-template-columns: repeat(4, 131px);
    grid-auto-rows: 147px;
    gap: 1px 22px;
    align-content: start;
    padding-left: 23px;
}

.file {
    display: flex;
    flex-direction: column;
    align-items: center;
    gap: 21px;
    padding-top: 18px;
}

.file svg {
    width: 106px;
    height: 84px;
}

.file.hover {
    background: #e5f3ff;
}

.preview {
    width: 88px;
    padding: 154px 4px 0;
    color: #666;
    text-align: center;
}

.dialog-footer {
    display: grid;
    grid-template-columns: 238px 1fr 235px;
    align-items: center;
    gap: 8px 0;
    padding: 16px 23px 16px 0;
    background: #f0f0f0;
}

.dialog-footer label {
    text-align: right;
}

.combo {
    display: flex;
    align-items: center;
    padding: 0 3px;
    border: 1px solid #ccc;
    border-radius: 2px;
    background: #fdfdfd;
    color: #666;
}

.combo input,
.combo select {
    flex: 1;
    appearance: none;
    color: #000;
}

.filename {
    height: 29px;
    margin: 0 15px 0 9px;
    border-color: #1a6fb5;
    background: #fff;
}

.filetype {
    height: 28px;
}

.actions {
    display: flex;
    grid-column: 3;
    gap: 17px;
}

.actions button {
    width: 109px;
    height: 31px;
    border: 1px solid #d0d0d0;
    border-radius: 4px;
    background: #fdfdfd;
}

.actions .primary {
    border-color: #1a6fb5;
}

.grip {
    position: absolute;
    right: 2px;
    bottom: 1px;
}

.cursor {
    position: absolute;
    top: 326px;
    left: 744px;
}

/* input method bar */
.ime {
    position: absolute;
    top: 522px;
    right: -14px;
    display: flex;
    align-items: center;
    gap: 9px;
    height: 31px;
    border: 1px solid #9a9a9a;
    border-left: none;
    background: #fff;
}

.ime-logo {
    margin-left: -15px;
}
```
